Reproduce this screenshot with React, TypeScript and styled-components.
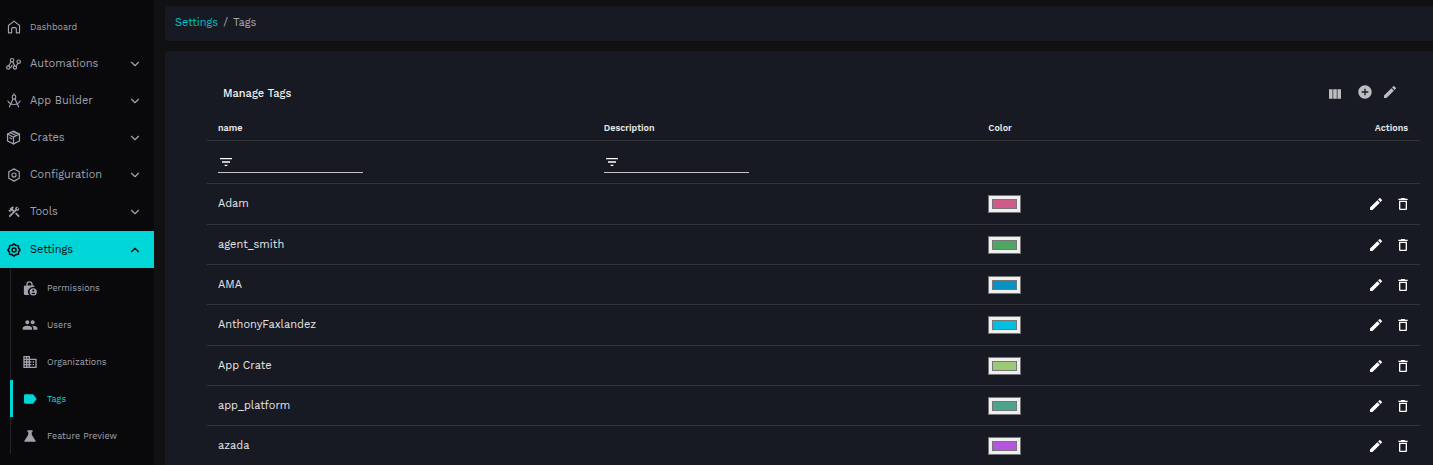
import React from "react";
import styled, { createGlobalStyle, css } from "styled-components";
import { ChevronDown, ChevronUp } from "lucide-react";
import {
  MdAddCircle,
  MdBusiness,
  MdConstruction,
  MdDeleteOutline,
  MdEdit,
  MdFilterList,
  MdLabel,
  MdPeople,
  MdViewColumn,
} from "react-icons/md";

const color = {
  page: "#111111",
  sidebar: "#09090b",
  panel: "#181a23",
  accent: "#00d5d8",
  muted: "#a0a2ae",
  text: "#e6e6e8",
  line: "#333539",
};

const GlobalStyle = createGlobalStyle`
  *, *::before, *::after { box-sizing: border-box; }
  body {
    margin: 0;
    background: ${color.page};
    color: ${color.text};
    font-family: "Work Sans", Inter, "Open Sans", sans-serif;
    font-size: 11px;
    line-height: 16px;
  }
  ul { list-style: none; margin: 0; padding: 0; }
  a { color: inherit; text-decoration: none; }
  button { font: inherit; color: inherit; background: none; border: 0; padding: 0; cursor: pointer; }
  svg { display: block; flex: none; }
`;

const Shell = styled.div`
  display: flex;
  height: 100vh;
  overflow: hidden;
`;

const Sidebar = styled.nav`
  flex: none;
  width: 154px;
  padding-top: 8px;
  overflow-y: auto;
  scrollbar-width: none;
  background: ${color.sidebar};
  color: ${color.muted};
`;

const navRow = css`
  display: flex;
  align-items: center;
  gap: 9px;
  width: 100%;
  height: 37px;
  padding: 0 12px 0 6px;
  text-align: left;
`;

const NavLink = styled.a`
  ${navRow}
  font-size: 9px;
`;

const NavButton = styled.button<{ $open?: boolean }>`
  && {
    ${navRow}
    ${(p) =>
      p.$open &&
      css`
        margin-top: 1px;
        background: ${color.accent};
        color: #07090b;
      `}
  }
`;

const NavIcon = styled.span`
  display: grid;
  place-items: center;
  width: 15px;
`;

const NavLabel = styled.span`
  flex: 1;
`;

const SubMenu = styled.ul`
  margin-left: 10px;
  padding-top: 1px;
`;

const SubLink = styled.a<{ $active?: boolean }>`
  display: flex;
  align-items: center;
  gap: 10px;
  height: 37px;
  padding-left: 11px;
  font-size: 9px;
  border-left: 1px solid #242529;
  ${(p) =>
    p.$active &&
    css`
      padding-left: 9px;
      border-left: 3px solid ${color.accent};
      color: ${color.accent};
    `}
`;

const Main = styled.main`
  flex: 1;
  min-width: 0;
  display: flex;
  flex-direction: column;
  gap: 10px;
  padding: 6px 0 0 11px;
  overflow-y: auto;
  scrollbar-width: none;
`;

const Breadcrumbs = styled.nav`
  display: flex;
  align-items: center;
  gap: 5px;
  flex: none;
  height: 35px;
  padding: 0 10px 2px;
  border-radius: 4px 0 0 4px;
  background: ${color.panel};
  color: #a8a9ad;

  a { color: #00c0c3; }
`;

const Panel = styled.section`
  flex: none;
  padding: 22px 13px 24px 42px;
  border-radius: 4px 0 0 0;
  background: ${color.panel};
`;

const Toolbar = styled.header`
  display: flex;
  align-items: center;
  height: 42px;
  padding: 0 22px 0 16px;
`;

const Title = styled.h1`
  flex: 1;
  margin: 0;
  font-size: 11px;
  font-weight: 500;
  color: #f4f4f5;
`;

const ToolbarActions = styled.div`
  display: flex;
  align-items: center;
  gap: 14px;
  color: #bdbdc0;
`;

const EditActions = styled.div`
  display: flex;
  align-items: center;
  gap: 9px;
  padding-bottom: 5px;
`;

const Table = styled.table`
  width: 100%;
  table-layout: fixed;
  border-spacing: 0;

  th, td {
    padding: 0 11px;
    border-bottom: 1px solid ${color.line};
    text-align: left;
    vertical-align: middle;
  }
  th {
    height: 26px;
    font-size: 9px;
    font-weight: 600;
  }
  th:last-child { padding-right: 12px; text-align: right; }
  td:last-child { padding-right: 9px; }
`;

const TextCol = styled.col<{ $width: number }>`
  width: ${(p) => p.$width}%;
`;

const FilterRow = styled.tr`
  height: 43px;
`;

const TagRow = styled.tr`
  height: 40px;
  &:nth-child(3n + 1) { height: 41px; }
`;

const FilterField = styled.label`
  display: flex;
  align-items: center;
  gap: 4px;
  width: 145px;
  height: 22px;
  border-bottom: 1px solid #c4c4c7;
  color: #ffffff;

  input {
    flex: 1;
    min-width: 0;
    padding: 0;
    border: 0;
    outline: 0;
    background: none;
    color: inherit;
    font: inherit;
  }
`;

const Swatch = styled.input`
  display: block;
  width: 33px;
  height: 18px;
  padding: 0;
  border: 1px solid #767676;
  background: #efefef;

  &::-webkit-color-swatch-wrapper { padding: 3px; }
  &::-webkit-color-swatch { border: 1px solid #767676; }
`;

const RowActions = styled.div`
  display: flex;
  justify-content: flex-end;
  gap: 11px;
  color: #ffffff;
`;

const line = {
  fill: "none",
  stroke: "currentColor",
  strokeWidth: 2,
  strokeLinecap: "round" as const,
  strokeLinejoin: "round" as const,
};

const HomeIcon = () => (
  <svg width="14" height="14" viewBox="0 0 24 24" {...line}>
    <path d="M2.5 9.5 12 2l9.500 7.500V22H16v-7a2 2 0 0 0-2-2h-4a2 2 0 0 0-2 2v7H2.500z" />
  </svg>
);

const NodesIcon = () => (
  <svg width="15" height="14" viewBox="0 0 26 24" {...line}>
    <circle cx="4" cy="18" r="2.800" />
    <circle cx="10.500" cy="5.500" r="3" />
    <circle cx="15.500" cy="18" r="2.800" />
    <circle cx="22" cy="8" r="3" />
    <path d="M4.500 15 8.800 8.500M12 8.500l2.800 6.500M17.500 16l3-5M7 18h1.500l2-4" />
  </svg>
);

const CompassIcon = () => (
  <svg width="14" height="15" viewBox="0 0 24 26" {...line}>
    <path d="M12 1.500v2" />
    <rect x="9" y="3.500" width="6" height="7.500" rx="3" />
    <path d="M10 11 4 24M14 11l6 13M1.500 14c2.500 4.500 6 6 10.500 6s8-1.500 10.500-6" />
  </svg>
);

const CrateIcon = () => (
  <svg width="15" height="15" viewBox="0 0 24 24" {...line}>
    <path d="m12 1.800 9.500 4.700v11L12 22.200l-9.500-4.700v-11z" />
    <path d="M2.500 6.500 12 11.500l9.500-5M12 11.500v10.700M7 4.300l9.500 5M11 2.500l6 3.200M6 12.500l3 1.500" />
  </svg>
);

const HexIcon = () => (
  <svg width="14" height="14" viewBox="0 0 24 24" {...line}>
    <path d="m12 1.500 9 5v11l-9 5-9-5v-11z" />
    <circle cx="12" cy="12" r="3.500" />
  </svg>
);

const GearIcon = () => (
  <svg width="14" height="14" viewBox="0 0 24 24" {...line} strokeWidth={2.600}>
    <path d="m12 1.500 3 2.500 4.400.6.6 4.400 2.500 3-2.500 3-.6 4.400L15 20l-3 2.500L9 20l-4.400-.6L4 15l-2.500-3L4 9l.6-4.400L9 4z" />
    <circle cx="12" cy="12" r="3.500" />
  </svg>
);

const LockUserIcon = () => (
  <svg width="15" height="16" viewBox="0 0 24 25" fill="currentColor">
    <path d="M18 8.500h-1V6.500a5 5 0 0 0-10 0v2H5A2 2 0 0 0 3 10.500v11a2 2 0 0 0 2 2h6.500a7.500 7.500 0 0 1 6.500-12.500h2v-.5a2 2 0 0 0-2-2zM9 8.500v-2a3 3 0 0 1 6 0v2z" />
    <path
      fillRule="evenodd"
      d="M18 13a5.700 5.700 0 1 0 0 11.400A5.700 5.700 0 0 0 18 13zm0 1.800a1.700 1.700 0 1 1 0 3.400 1.700 1.700 0 0 1 0-3.400zm0 7.700c-1.400 0-2.500-.6-3.200-1.600.4-1.200 5.900-1.200 6.400 0-.7 1-1.800 1.600-3.200 1.600z"
    />
  </svg>
);

const FlaskIcon = () => (
  <svg width="14" height="14" viewBox="0 0 24 24" fill="currentColor">
    <path d="M7.500 2h9v2.500H15V10l6.500 10c.8 1.300.2 2-1 2h-17c-1.200 0-1.800-.7-1-2L9 10V4.500H7.500z" />
  </svg>
);

const sections = [
  { label: "Automations", icon: <NodesIcon /> },
  { label: "App Builder", icon: <CompassIcon /> },
  { label: "Crates", icon: <CrateIcon /> },
  { label: "Configuration", icon: <HexIcon /> },
  { label: "Tools", icon: <MdConstruction size={14} /> },
  { label: "Settings", icon: <GearIcon />, open: true },
];

const settingsLinks = [
  { label: "Permissions", icon: <LockUserIcon /> },
  { label: "Users", icon: <MdPeople size={16} /> },
  { label: "Organizations", icon: <MdBusiness size={16} /> },
  { label: "Tags", icon: <MdLabel size={16} />, active: true },
  { label: "Feature Preview", icon: <FlaskIcon /> },
];

const tags = [
  { name: "Adam", color: "#cf5b8a" },
  { name: "agent_smith", color: "#4fa562" },
  { name: "AMA", color: "#0693c4" },
  { name: "AnthonyFaxlandez", color: "#00bfe0" },
  { name: "App Crate", color: "#9aca76" },
  { name: "app_platform", color: "#4ca58b" },
  { name: "azada", color: "#b456dd" },
];

export default function App() {
  return (
    <>
      <GlobalStyle />
      <Shell>
        <Sidebar aria-label="Main">
          <NavLink href="#dashboard">
            <NavIcon><HomeIcon /></NavIcon>
            <NavLabel>Dashboard</NavLabel>
          </NavLink>
          {sections.map((s) => (
            <NavButton key={s.label} type="button" $open={s.open} aria-expanded={!!s.open}>
              <NavIcon>{s.icon}</NavIcon>
              <NavLabel>{s.label}</NavLabel>
              {s.open ? <ChevronUp size={14} /> : <ChevronDown size={14} />}
            </NavButton>
          ))}
          <SubMenu>
            {settingsLinks.map((l) => (
              <li key={l.label}>
                <SubLink href={`#${l.label}`} $active={l.active} aria-current={l.active ? "page" : undefined}>
                  <NavIcon>{l.icon}</NavIcon>
                  {l.label}
                </SubLink>
              </li>
            ))}
          </SubMenu>
        </Sidebar>
        <Main>
          <Breadcrumbs aria-label="Breadcrumb">
            <a href="#settings">Settings</a>
            <span>/</span>
            <span>Tags</span>
          </Breadcrumbs>
          <Panel>
            <Toolbar>
              <Title>Manage Tags</Title>
              <ToolbarActions>
                <button type="button" aria-label="Show columns"><MdViewColumn size={16} /></button>
                <EditActions>
                  <button type="button" aria-label="Add tag"><MdAddCircle size={16} /></button>
                  <button type="button" aria-label="Edit tags"><MdEdit size={16} /></button>
                </EditActions>
              </ToolbarActions>
            </Toolbar>
            <Table>
              <colgroup>
                <TextCol $width={31.8} />
                <TextCol $width={31.7} />
                <col />
                <col />
              </colgroup>
              <thead>
                <tr>
                  <th scope="col">name</th>
                  <th scope="col">Description</th>
                  <th scope="col">Color</th>
                  <th scope="col">Actions</th>
                </tr>
              </thead>
              <tbody>
                <FilterRow>
                  <td>
                    <FilterField>
                      <MdFilterList size={16} />
                      <input type="text" aria-label="Filter by name" />
                    </FilterField>
                  </td>
                  <td>
                    <FilterField>
                      <MdFilterList size={16} />
                      <input type="text" aria-label="Filter by description" />
                    </FilterField>
                  </td>
                  <td />
                  <td />
                </FilterRow>
              </tbody>
              <tbody>
                {tags.map((t) => (
                  <TagRow key={t.name}>
                    <td>{t.name}</td>
                    <td />
                    <td>
                      <Swatch type="color" defaultValue={t.color} aria-label={`${t.name} color`} />
                    </td>
                    <td>
                      <RowActions>
                        <button type="button" aria-label={`Edit ${t.name}`}><MdEdit size={16} /></button>
                        <button type="button" aria-label={`Delete ${t.name}`}><MdDeleteOutline size={16} /></button>
                      </RowActions>
                    </td>
                  </TagRow>
                ))}
              </tbody>
            </Table>
          </Panel>
        </Main>
      </Shell>
    </>
  );
}
